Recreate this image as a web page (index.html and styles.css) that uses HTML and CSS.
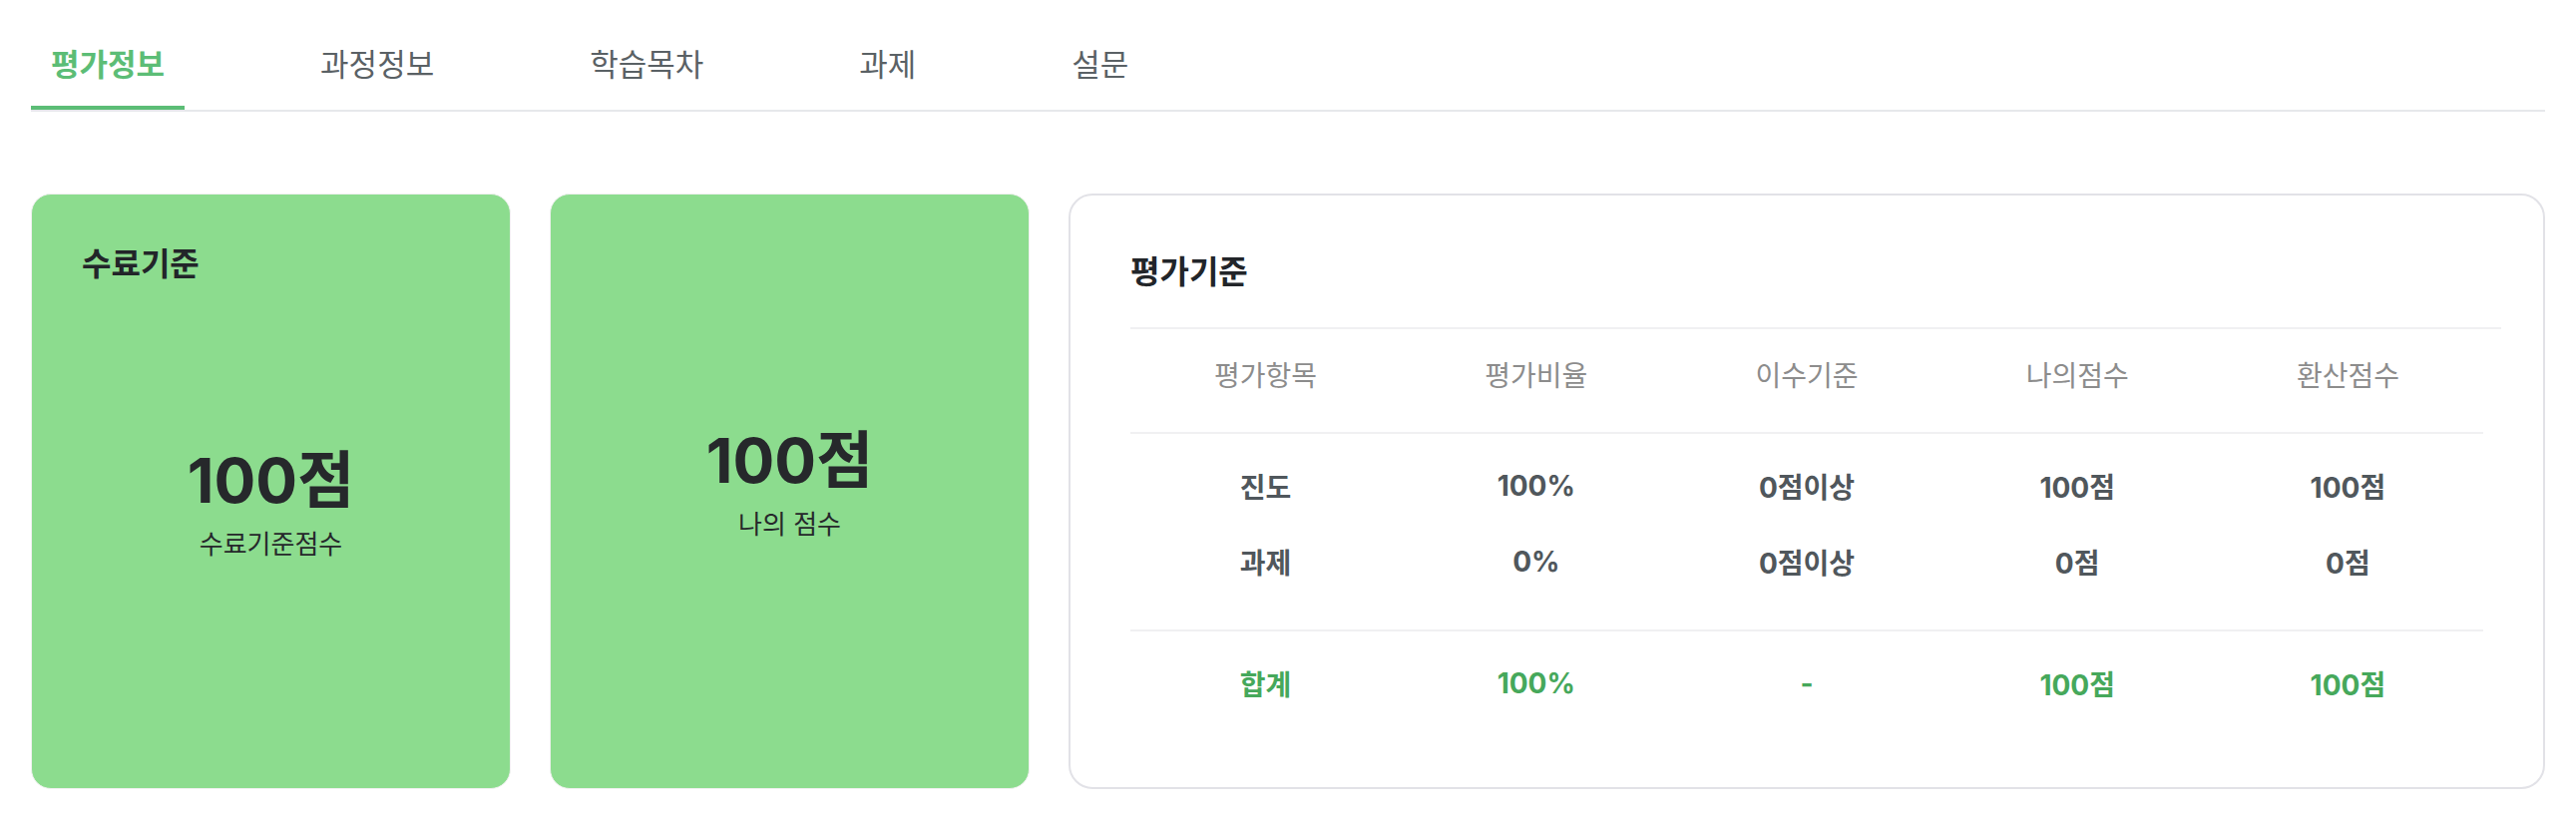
FILE: index.html
```html
<!DOCTYPE html>
<html lang="ko">
<head>
    <meta charset="UTF-8">
    <meta name="viewport" content="width=device-width, initial-scale=1.0">
    <title>평가정보</title>
    <link rel="stylesheet" href="styles.css">
</head>
<body>
    <div class="page">
        <nav class="tabs">
            <a class="tab active">평가정보</a>
            <a class="tab">과정정보</a>
            <a class="tab">학습목차</a>
            <a class="tab">과제</a>
            <a class="tab">설문</a>
        </nav>

        <div class="cards">
            <section class="score-card">
                <h2 class="card-title">수료기준</h2>
                <div class="score-body">
                    <strong class="score">100점</strong>
                    <span class="score-label">수료기준점수</span>
                </div>
            </section>

            <section class="score-card">
                <div class="score-body">
                    <strong class="score">100점</strong>
                    <span class="score-label">나의 점수</span>
                </div>
            </section>

            <section class="criteria-card">
                <h2 class="card-title criteria-title">평가기준</h2>
                <div class="criteria">
                    <div class="criteria-row criteria-head">
                        <span>평가항목</span>
                        <span>평가비율</span>
                        <span>이수기준</span>
                        <span>나의점수</span>
                        <span>환산점수</span>
                    </div>
                    <div class="criteria-body">
                        <div class="criteria-row">
                            <span>진도</span>
                            <span>100%</span>
                            <span>0점이상</span>
                            <span>100점</span>
                            <span>100점</span>
                        </div>
                        <div class="criteria-row">
                            <span>과제</span>
                            <span>0%</span>
                            <span>0점이상</span>
                            <span>0점</span>
                            <span>0점</span>
                        </div>
                    </div>
                    <div class="criteria-row criteria-foot">
                        <span>합계</span>
                        <span>100%</span>
                        <span>-</span>
                        <span>100점</span>
                        <span>100점</span>
                    </div>
                </div>
            </section>
        </div>
    </div>
</body>
</html>
```

FILE: styles.css
```css
body, html {
    margin: 0;
    padding: 0;
    background: #fff;
    font-family: Inter, 'Noto Sans CJK KR', sans-serif;
    color: #222529;
}
.page {
    padding: 0 31px;
}
.tabs {
    display: flex;
    gap: 116px;
    border-bottom: 2px solid #e6e8eb;
}
.tab {
    display: block;
    padding: 45px 20px 21px;
    line-height: 40px;
    font-size: 31px;
    color: #5a6165;
    border-bottom: 4px solid transparent;
    cursor: pointer;
}
.tab.active {
    color: #5cbd76;
    font-weight: 700;
    border-bottom-color: #5cbd76;
}
.cards {
    display: grid;
    grid-template-columns: 481px 481px 1fr;
    gap: 39px;
    height: 597px;
    margin-top: 82px;
}
.card-title {
    margin: 0;
    font-size: 32px;
    line-height: 40px;
    font-weight: 700;
    color: #222529;
}
.score-card {
    box-sizing: border-box;
    display: flex;
    flex-direction: column;
    padding: 50px;
    background: #8cdc8e;
    border: 1px solid #f0f0f0;
    border-radius: 20px;
}
.score-body {
    flex: 1;
    display: flex;
    flex-direction: column;
    align-items: center;
    justify-content: center;
    padding-bottom: 16px;
}
.score {
    font-size: 62px;
    line-height: 72px;
    font-weight: 700;
    color: #26282b;
}
.score-label {
    font-size: 26px;
    line-height: 36px;
    margin-top: 10px;
    color: #26282b;
}
.criteria-card {
    box-sizing: border-box;
    padding: 57px 60px 48px;
    border: 2px solid #e2e2e7;
    border-radius: 24px;
}
.criteria-title {
    padding-bottom: 35px;
    margin-right: -18px;
    border-bottom: 2px solid #f0f0f2;
}
.criteria-row {
    display: grid;
    grid-template-columns: repeat(5, 1fr);
    align-items: center;
    text-align: center;
    font-size: 28px;
    font-weight: 700;
    color: #50575c;
}
.criteria-head {
    box-sizing: border-box;
    height: 105px;
    padding-bottom: 14px;
    font-weight: 400;
    color: #8c8c8c;
    border-bottom: 2px solid #f0f0f2;
}
.criteria-body {
    padding: 14px 0 30px;
    border-bottom: 2px solid #f0f0f2;
}
.criteria-body .criteria-row {
    height: 76px;
}
.criteria-foot {
    height: 104px;
    color: #46a85b;
}
```
